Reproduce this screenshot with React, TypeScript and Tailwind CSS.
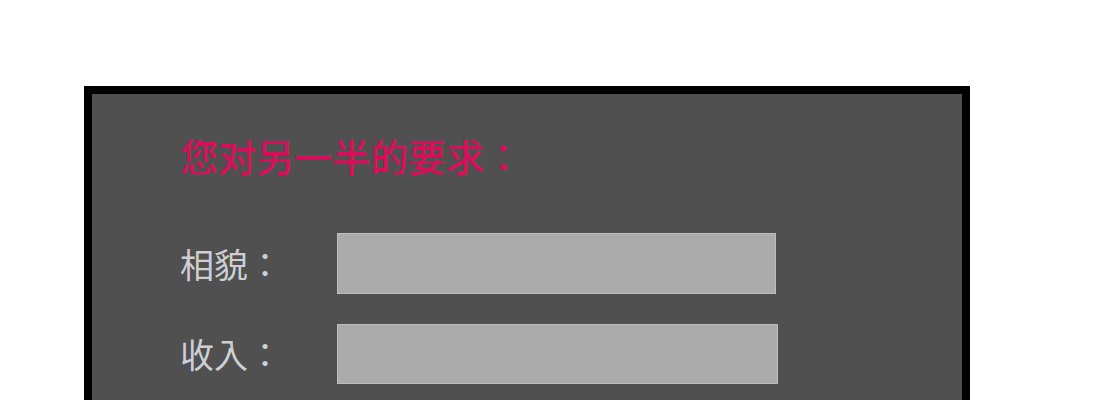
import { useState } from 'react';

const cjk = { fontFamily: '"Noto Sans CJK TC", "Noto Sans", sans-serif' };

export default function App() {
  const [looks, setLooks] = useState('');
  const [income, setIncome] = useState('');

  return (
    <main className="min-h-[400px] bg-white pt-[86px] pl-[84px]" style={cjk}>
      <div className="w-[886px] border-8 border-black bg-[#505050] pl-[88px] pb-10">
        <h1 className="mt-[42px] text-[38px] leading-[38px] font-medium text-[#d4105a]">
          您对另一半的要求：
        </h1>

        <div className="mt-[59px] flex flex-col gap-[30px]">
          <div className="flex items-center">
            <label className="w-[157px] text-[34px] leading-[40px] text-[#cfcfcf]">
              相貌：
            </label>
            <input
              value={looks}
              onChange={(e) => setLooks(e.target.value)}
              className="h-[61px] w-[439px] border border-[#bdbdbd] bg-[#ababab] outline-none"
            />
          </div>
          <div className="flex items-center">
            <label className="w-[157px] text-[34px] leading-[40px] text-[#cfcfcf]">
              收入：
            </label>
            <input
              value={income}
              onChange={(e) => setIncome(e.target.value)}
              className="h-[60px] w-[441px] border border-[#bdbdbd] bg-[#ababab] outline-none"
            />
          </div>
        </div>
      </div>
    </main>
  );
}
